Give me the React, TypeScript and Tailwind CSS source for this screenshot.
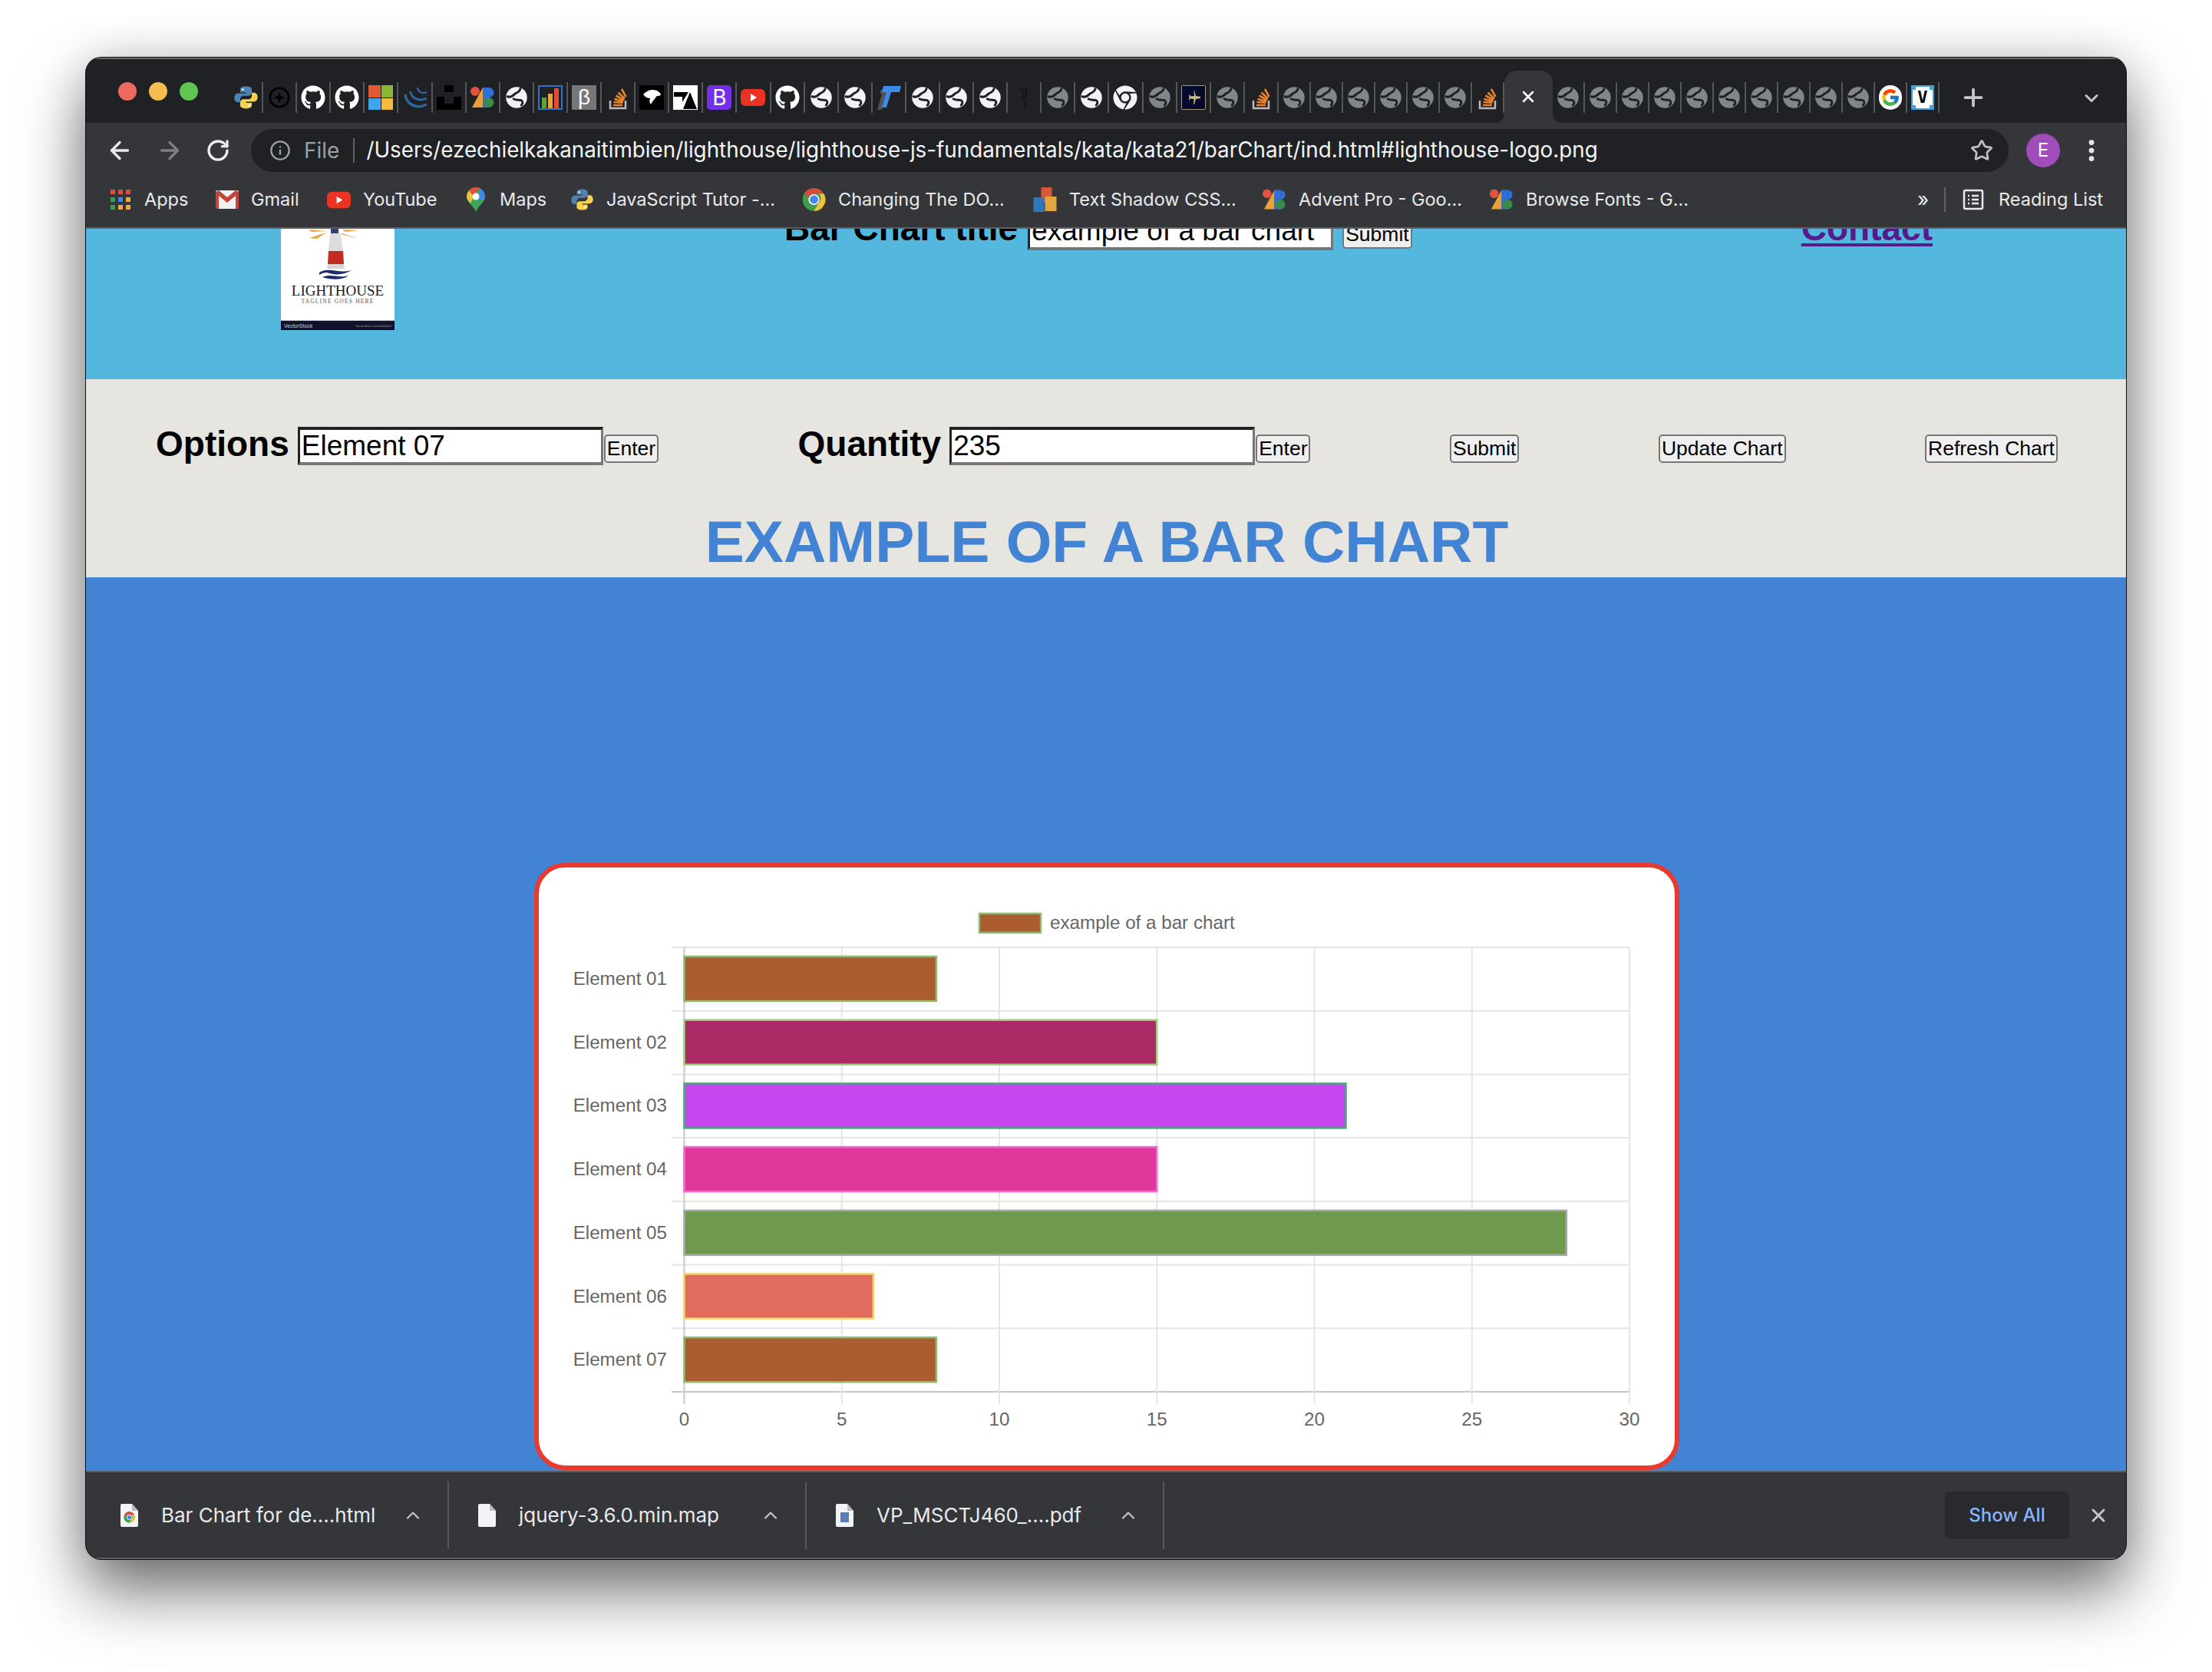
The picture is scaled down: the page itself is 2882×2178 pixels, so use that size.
import React from "react";
import { ArrowLeft, ArrowRight, RotateCw, Info, Star, MoreVertical, ChevronUp, ChevronDown, X, Plus } from "lucide-react";
import { FaGithub, FaChrome } from "react-icons/fa";
import { FcGoogle } from "react-icons/fc";

const bars = [
  { label: "Element 01", value: 8, fill: "#ab5c31", stroke: "#8dbb6f" },
  { label: "Element 02", value: 15, fill: "#ab2965", stroke: "#9fd179" },
  { label: "Element 03", value: 21, fill: "#c646f0", stroke: "#4ba97e" },
  { label: "Element 04", value: 15, fill: "#e0379c", stroke: "#f06ccb" },
  { label: "Element 05", value: 28, fill: "#6f994d", stroke: "#a9a9a9" },
  { label: "Element 06", value: 6, fill: "#e06b5e", stroke: "#f3d26e" },
  { label: "Element 07", value: 8, fill: "#ab5c31", stroke: "#8dbb6f" },
];

function Globe({ color }: { color: string }) {
  return (
    <svg viewBox="0 0 24 24" className="w-[30px] h-[32px]">
      <circle cx="12" cy="12" r="11" fill={color} />
      <path d="M2.500 11c3 1.200 5.500-.5 7.500-2.500s5-1.500 6-5.500" fill="none" stroke="#202124" strokeWidth="2.400" strokeLinecap="round" />
      <path d="M9 13.500c3 2 6 .5 8 1.500s1.500 3.500 0 5" fill="none" stroke="#202124" strokeWidth="2.400" strokeLinecap="round" />
    </svg>
  );
}

function Python({ className = "w-[33px] h-[34px]" }: { className?: string }) {
  const half = "M12 1.500c-3.500 0-5.500 1-5.500 3v2.500h5.500v1H4.500C2.500 8 1 9.800 1 12.300s1.300 4.200 3.500 4.200h2v-2.800c0-2 1.600-3.400 3.500-3.400h4.500c1.600 0 3-1.300 3-3V4.500c0-2-2.500-3-5.500-3z";
  return (
    <svg viewBox="0 0 24 24" className={className}>
      <path d={half} fill="#4f83b3" />
      <path d={half} fill="#f7d04f" transform="rotate(180 12 12)" />
      <circle cx="9" cy="4.400" r="1" fill="#fff" />
      <circle cx="15" cy="19.600" r="1" fill="#fff" />
    </svg>
  );
}

function FontsLogo({ className = "w-[32px] h-[32px]" }: { className?: string }) {
  return (
    <svg viewBox="0 0 32 32" className={className}>
      <path d="M2 29 L16 3 V29 Z" fill="#eba137" />
      <circle cx="6" cy="8" r="6" fill="#e3513f" />
      <rect x="16" y="3" width="8" height="26" fill="#2d6fdc" />
      <path d="M24 3a6.500 6.500 0 0 1 0 13z" fill="#2d6fdc" />
      <circle cx="24" cy="22.500" r="6.500" fill="#3a8a4a" />
    </svg>
  );
}

function ChromeLogo({ className = "w-[32px] h-[32px]" }: { className?: string }) {
  return (
    <svg viewBox="0 0 24 24" className={className}>
      <circle cx="12" cy="12" r="11.500" fill="#3f9c4c" />
      <path d="M12 .5a11.500 11.500 0 0 1 10 5.750H12a5.750 5.750 0 0 0-5.500 4L2.500 5.500A11.500 11.500 0 0 1 12 .5z" fill="#d94a3d" />
      <path d="M22 6.250A11.500 11.500 0 0 1 12 23.500l5-8.500a5.750 5.750 0 0 0 0-8.750z" fill="#f3c23c" />
      <circle cx="12" cy="12" r="5.500" fill="#fff" />
      <circle cx="12" cy="12" r="4.200" fill="#4a84e8" />
    </svg>
  );
}

function Favicon({ kind }: { kind: string }) {
  switch (kind) {
    case "python":
      return <Python />;
    case "compass":
      return (
        <svg viewBox="0 0 32 32" className="w-[30px] h-[30px]">
          <circle cx="16" cy="16" r="13" fill="none" stroke="#000" strokeWidth="3" />
          <path d="M16 8l2 6 6 2-6 2-2 6-2-6-6-2 6-2z" fill="#000" />
        </svg>
      );
    case "github":
      return <FaGithub className="w-[32px] h-[32px] text-white" />;
    case "ms":
      return (
        <div className="grid grid-cols-2 gap-[1px] w-[32px] h-[32px]">
          <div className="bg-[#e25a33]" />
          <div className="bg-[#8cb733]" />
          <div className="bg-[#3fa6ee]" />
          <div className="bg-[#f7bb3c]" />
        </div>
      );
    case "jquery":
      return (
        <svg viewBox="0 0 32 32" className="w-[32px] h-[32px]" fill="none" stroke="#2f659f">
          <path d="M3 12c1 12 14 20 28 13" strokeWidth="3.500" />
          <path d="M10 8c0 8 10 14 21 9" strokeWidth="3" />
          <path d="M19 3c0 5 6 9 12 6" strokeWidth="2.500" />
        </svg>
      );
    case "unsplash":
      return (
        <svg viewBox="0 0 32 32" className="w-[32px] h-[32px]">
          <path d="M10 0h12v9H10zM0 15h10v9h12v-9h10v17H0z" fill="#000" />
        </svg>
      );
    case "fonts":
      return <FontsLogo />;
    case "globe":
      return <Globe color="#f1f3f4" />;
    case "gray":
      return <Globe color="#80868b" />;
    case "bars":
      return (
        <div className="flex items-end justify-center gap-[2px] w-[32px] h-[32px] border-2 border-[#2d74c9] px-[3px]">
          <div className="w-[6px] h-[14px] bg-[#58a530]" />
          <div className="w-[6px] h-[19px] bg-[#eba137]" />
          <div className="w-[6px] h-[26px] bg-[#e54b35]" />
        </div>
      );
    case "beta":
      return (
        <div className="flex items-center justify-center w-[32px] h-[32px] bg-[#777] text-white text-[28px] leading-none font-['Liberation_Sans',sans-serif]">
          β
        </div>
      );
    case "so":
      return (
        <svg viewBox="0 0 32 32" className="w-[32px] h-[32px]">
          <path d="M6 20v10h20V20" fill="none" stroke="#bcbbbb" strokeWidth="2.500" />
          <path d="M10 26h12M10.500 22l12 .8M11.500 18l11.500 3M13.500 13.500l10.500 6M16.500 9.500l8.500 8M21 5l5.500 10" stroke="#e9822d" strokeWidth="2.600" fill="none" />
        </svg>
      );
    case "eagle":
      return (
        <svg viewBox="0 0 32 32" className="w-[32px] h-[32px] bg-black">
          <path d="M5 12c3-3 7-6 12-6 5 0 9 2 11 6-1 2-3 2-5 2-2 2-4 5-7 9l-1 2c-2-2-2-5-1-8-3 0-6-1-9-5z" fill="#fff" />
        </svg>
      );
    case "ta":
      return (
        <svg viewBox="0 0 32 32" className="w-[32px] h-[32px] bg-white">
          <path d="M1 9h19l-8 13 0-7H1zM22 9l9 22H13z" fill="#000" />
        </svg>
      );
    case "bootstrap":
      return (
        <div className="flex items-center justify-center w-[32px] h-[32px] rounded-[5px] bg-[#7430e9] text-white text-[28px] leading-none font-['Inter',sans-serif]">
          B
        </div>
      );
    case "youtube":
      return (
        <svg viewBox="0 0 32 32" className="w-[32px] h-[32px]">
          <rect x="0" y="5" width="32" height="22" rx="6" fill="#ea3323" />
          <path d="M13 11l8 5-8 5z" fill="#fff" />
        </svg>
      );
    case "tail":
      return (
        <svg viewBox="0 0 32 32" className="w-[32px] h-[32px]">
          <path d="M6 6h8l-1 5-6 21H1l6-21H4z" fill="#4d5358" />
          <path d="M9 1h23l-2 8H19l-6 20H7l6-20H7z" fill="#3a8ce8" />
        </svg>
      );
    case "sketch":
      return (
        <svg viewBox="0 0 32 32" className="w-[30px] h-[34px]" fill="none" stroke="#0c0c0c" strokeWidth="1">
          <path d="M8 4l8 2c4 2 4 6 1 9l-5 3M14 6l4 26M20 4l-2 14" />
        </svg>
      );
    case "chromewhite":
      return <FaChrome className="w-[32px] h-[32px] text-[#f1f3f4]" />;
    case "plane":
      return (
        <svg viewBox="0 0 32 32" className="w-[32px] h-[32px]">
          <rect x="0.500" y="0.500" width="31" height="31" rx="1" fill="#060a2a" stroke="#a89a80" />
          <path d="M17 7l2 7 6 1v2l-6 1-2 7h-1l.5-7-4.500-.5-1.500 2H10l.5-3.500-.5-3.500h1l1.500 2 4.500-.5-.5-7z" fill="#cdb98e" />
        </svg>
      );
    case "google":
      return (
        <div className="flex items-center justify-center w-[30px] h-[32px] rounded-full bg-white">
          <FcGoogle className="w-[26px] h-[26px]" />
        </div>
      );
    case "vb":
      return (
        <div className="relative flex items-center justify-center w-[30px] h-[32px] border-2 border-[#42a0d8] bg-white text-black font-bold text-[22px] leading-none font-['DejaVu_Sans_Mono',monospace]">
          V
          <div className="absolute -left-[2px] -top-[2px] w-[6px] h-[6px] bg-[#42a0d8]" />
          <div className="absolute -right-[2px] -top-[2px] w-[6px] h-[6px] bg-[#42a0d8]" />
          <div className="absolute -left-[2px] -bottom-[2px] w-[6px] h-[6px] bg-[#42a0d8]" />
          <div className="absolute -right-[2px] -bottom-[2px] w-[6px] h-[6px] bg-[#42a0d8]" />
        </div>
      );
    default:
      return null;
  }
}

const tabsBefore = [
  "python", "compass", "github", "github", "ms", "jquery", "unsplash", "fonts", "globe", "bars",
  "beta", "so", "eagle", "ta", "bootstrap", "youtube", "github", "globe", "globe", "tail",
  "globe", "globe", "globe", "sketch", "gray", "globe", "chromewhite", "gray", "plane", "gray", "so",
];
const tabsMiddle = ["gray", "gray", "gray", "gray", "gray", "gray", "so"];
const tabsAfter = ["gray", "gray", "gray", "gray", "gray", "gray", "gray", "gray", "gray", "gray", "google", "vb"];

function Tab({ kind, wide }: { kind: string; wide?: boolean }) {
  return (
    <div className={wide ? "w-[44.1px] h-[40px] mt-[15px] flex items-center justify-center border-r-2 border-[#55575b]" : "w-[42px] h-[40px] mt-[15px] flex items-center justify-center border-r-2 border-[#55575b]"}>
      <Favicon kind={kind} />
    </div>
  );
}

function Bookmark({ icon, label, width }: { icon: React.ReactNode; label: string; width: string }) {
  return (
    <div className={`flex items-center gap-[16px] shrink-0 ${width}`}>
      <div className="w-[31px] h-[32px] flex items-center justify-center">{icon}</div>
      <span>{label}</span>
    </div>
  );
}

function PageIcon({ children }: { children?: React.ReactNode }) {
  return (
    <div className="relative flex items-center justify-center w-[23px] h-[30px]">
      <svg viewBox="0 0 23 30" className="absolute inset-0 w-[23px] h-[30px]">
        <path d="M0 2Q0 0 2 0H15L23 9V28Q23 30 21 30H2Q0 30 0 28Z" fill="#f1f3f4" />
        <path d="M15 0V9H23Z" fill="#b8babd" />
      </svg>
      <div className="relative mt-[6px] flex">{children}</div>
    </div>
  );
}

function DownloadItem({ icon, label }: { icon: React.ReactNode; label: string }) {
  return (
    <div className="flex items-center w-[466px] h-[88px] pl-[38px] pr-[31px] border-r-2 border-[#55575b]">
      {icon}
      <span className="ml-[30px] flex-1">{label}</span>
      <ChevronUp className="w-[28px] h-[28px] text-[#bdc1c6]" />
    </div>
  );
}

function FieldLabel({ text, offset }: { text: string; offset: "options" | "title" }) {
  return (
    <span className={offset === "options" ? "h-[50px] leading-[50px] -mt-[3px] text-[46px] font-bold text-black mr-[11px]" : "h-[50px] leading-[50px] -mt-[4px] text-[46px] font-bold text-black mr-[13px]"}>
      {text}
    </span>
  );
}

function FieldInput({ value }: { value: string }) {
  return (
    <input
      readOnly
      value={value}
      className="w-[398px] h-[50px] px-[2px] pb-[1px] border-y-4 border-x-[3px] border-t-[#222] border-l-[#222] border-b-[#767676] border-r-[#767676] bg-white text-[37px] leading-none text-black outline-none"
    />
  );
}

function PageButton({ text }: { text: string }) {
  return (
    <button className="h-[37px] px-[2px] border-2 border-[#767676] rounded-[5px] bg-[#efefef] text-[26.500px] leading-none text-black">
      {text}
    </button>
  );
}

function Chart() {
  const x0 = 890.5;
  const unit = 41.05;
  const top = 1234;
  const row = 82.7;
  return (
    <svg viewBox="701 1130 1480 779" className="w-[1480px] h-[779px]" fontFamily="'Liberation Sans', sans-serif">
      <rect x="1275" y="1190" width="80" height="25" fill="#ab5c31" stroke="#8dbb6f" strokeWidth="2.500" />
      <text x="1367" y="1210" fontSize="24.200" fill="#666">example of a bar chart</text>

      {[0, 1, 2, 3, 4, 5, 6].map((i) => (
        <line key={i} x1="874" x2="2122" y1={top + i * row} y2={top + i * row} stroke="#e5e5e5" strokeWidth="2" />
      ))}
      <line x1="874" x2="2122" y1={top + 7 * row} y2={top + 7 * row} stroke="#c8c8c8" strokeWidth="2" />
      {[0, 5, 10, 15, 20, 25, 30].map((t) => (
        <g key={t}>
          <line x1={x0 + t * unit} x2={x0 + t * unit} y1={top} y2={top + 7 * row + 16} stroke={t === 0 ? "#c8c8c8" : "#e5e5e5"} strokeWidth="2" />
          <text x={x0 + t * unit} y="1857" fontSize="24.200" fill="#666" textAnchor="middle">{t}</text>
        </g>
      ))}
      {bars.map((b, i) => (
        <g key={b.label}>
          <rect x={x0} y={top + i * row + 12} width={b.value * unit} height="58" fill={b.fill} stroke={b.stroke} strokeWidth="2.500" />
          <text x="868" y={top + i * row + 49} fontSize="24.200" fill="#666" textAnchor="end">{b.label}</text>
        </g>
      ))}
    </svg>
  );
}

function Logo() {
  return (
    <svg viewBox="366 298 148 132" className="w-[148px] h-[132px] bg-white" fontFamily="'Liberation Serif', serif">
      <path d="M402 299l24 2-20 1zM403 310l22-7-12 8zM446 299l22 1-18 2zM446 304l20 7-22-6z" fill="#f0a33c" />
      <path d="M431 298h10v6h-10z" fill="#33407a" />
      <path d="M430 304h14l3 24h-19z" fill="#dcdcdc" />
      <path d="M428 327h19l1 17h-21z" fill="#c52b20" />
      <path d="M427 344h21l1 6h-23z" fill="#d5d5d5" />
      <path d="M416 355c12-8 24 2 42-3-9 6-22 7-32 3-4 0-7 1-10 3z M420 361c12-5 20 2 34-2-8 6-22 6-34 2z" fill="#1d2a6b" />
      <text x="440" y="385" fontSize="19" fill="#1b1b1b" textAnchor="middle">LIGHTHOUSE</text>
      <text x="440" y="395" fontSize="7.500" fill="#555" textAnchor="middle" letterSpacing="1.200">TAGLINE GOES HERE</text>
      <rect x="366" y="417" width="148" height="1.500" fill="#bbb" />
      <rect x="366" y="418" width="148" height="12" fill="#12122a" />
      <text x="370" y="427" fontSize="7" fill="#ccc" fontFamily="'Liberation Sans', sans-serif">VectorStock</text>
      <text x="510" y="426" fontSize="4" fill="#999" textAnchor="end" fontFamily="'Liberation Sans', sans-serif">VectorStock.com/0000000</text>
    </svg>
  );
}

export default function App() {
  return (
    <div className="w-[2882px] h-[2178px] pt-[75px] pl-[112px] overflow-hidden bg-white font-['Liberation_Sans',sans-serif]">
      <div className="flex flex-col w-[2658px] h-[1956px] rounded-[20px] overflow-hidden bg-[#202124] shadow-[0_0_0_1px_#111,0_42px_84px_rgba(0,0,0,0.55),0_0_60px_rgba(0,0,0,0.15)] font-['Inter',sans-serif]">
        {/* Tab strip */}
        <div className="relative flex shrink-0 h-[85px] pt-[15px] border-t-2 border-[#6a6a6c] bg-[#202124]">
          <div className="flex gap-[16px] pl-[42px] pt-[15px] mr-[41px]">
            <div className="w-[24px] h-[24px] rounded-full bg-[#ed6a5e]" />
            <div className="w-[24px] h-[24px] rounded-full bg-[#f5bd4f]" />
            <div className="w-[24px] h-[24px] rounded-full bg-[#61c554]" />
          </div>
          {tabsBefore.map((kind, i) => (
            <Tab key={i} kind={kind} wide />
          ))}
          {tabsMiddle.map((kind, i) => (
            <Tab key={i} kind={kind} />
          ))}
          <div className="relative flex items-center justify-center w-[63px] h-[68px] rounded-t-[16px] bg-[#35363a]">
            <X className="w-[24px] h-[24px] text-white" strokeWidth={2.500} />
            <div className="absolute -left-[12px] bottom-0 w-[12px] h-[12px] bg-[#35363a]">
              <div className="w-full h-full rounded-br-[12px] bg-[#202124]" />
            </div>
            <div className="absolute -right-[12px] bottom-0 w-[12px] h-[12px] bg-[#35363a]">
              <div className="w-full h-full rounded-bl-[12px] bg-[#202124]" />
            </div>
          </div>
          {tabsAfter.map((kind, i) => (
            <Tab key={i} kind={kind} />
          ))}
          <Plus className="ml-[26px] mt-[17px] w-[36px] h-[36px] text-[#c4c7cb]" strokeWidth={2.500} />
          <ChevronDown className="ml-[122px] mt-[22px] w-[28px] h-[28px] text-[#c4c7cb]" strokeWidth={2.500} />
        </div>

        {/* Address bar */}
        <div className="flex items-center shrink-0 h-[72px] bg-[#35363a]">
          <ArrowLeft className="ml-[26px] w-[36px] h-[36px] text-[#e8eaed]" strokeWidth={2.200} />
          <ArrowRight className="ml-[29px] w-[36px] h-[36px] text-[#7c7f83]" strokeWidth={2.200} />
          <RotateCw className="ml-[29px] w-[32px] h-[32px] text-[#e8eaed]" strokeWidth={2.500} />
          <div className="flex items-center flex-1 h-[56px] ml-[27px] pl-[24px] pr-[20px] rounded-[28px] bg-[#202124]">
            <Info className="w-[28px] h-[28px] text-[#9aa0a6]" strokeWidth={2} />
            <span className="ml-[17px] text-[28px] text-[#9aa0a6]">File</span>
            <div className="ml-[18px] w-[2px] h-[32px] bg-[#5f6368]" />
            <span className="ml-[15px] flex-1 text-[27.800px] text-[#f1f3f4]">/Users/ezechielkakanaitimbien/lighthouse/lighthouse-js-fundamentals/kata/kata21/barChart/ind.html#lighthouse-logo.png</span>
            <Star className="w-[30px] h-[30px] text-[#bdc1c6]" strokeWidth={2.200} />
          </div>
          <div className="flex items-center justify-center w-[44px] h-[44px] ml-[23px] rounded-full bg-[#a04cba] text-white text-[24px]">E</div>
          <MoreVertical className="ml-[23px] mr-[27px] w-[36px] h-[36px] text-[#e8eaed]" strokeWidth={2.500} />
        </div>

        {/* Bookmarks bar */}
        <div className="flex items-center shrink-0 h-[66px] pb-[8px] pl-[29px] pr-[30px] border-b-2 border-[#5f6063] bg-[#35363a] text-[23.500px] text-[#e8eaed]">
          <Bookmark
            width="w-[139px]"
            label="Apps"
            icon={
              <div className="grid grid-cols-3 gap-[4px]">
                {["#e0503d", "#e0503d", "#e0503d", "#3f9c4c", "#4285f4", "#f3a73b", "#3f9c4c", "#f3a73b", "#f3a73b"].map((c, i) => (
                  <div key={i} className="w-[6px] h-[6px]" style={{ backgroundColor: c }} />
                ))}
              </div>
            }
          />
          <Bookmark
            width="w-[146px]"
            label="Gmail"
            icon={
              <svg viewBox="0 0 30 24" className="w-[30px] h-[24px]">
                <rect width="30" height="24" rx="2" fill="#f1f1f1" />
                <path d="M0 2v22h4V7l11 9 11-9v17h4V2l-4-2-11 9L4 0z" fill="#c5443a" />
              </svg>
            }
          />
          <Bookmark
            width="w-[178px]"
            label="YouTube"
            icon={
              <svg viewBox="0 0 32 32" className="w-[31px] h-[31px]">
                <rect x="0" y="5" width="32" height="22" rx="6" fill="#ea3323" />
                <path d="M13 11l8 5-8 5z" fill="#fff" />
              </svg>
            }
          />
          <Bookmark
            width="w-[139px]"
            label="Maps"
            icon={
              <svg viewBox="0 0 24 32" className="w-[24px] h-[32px]">
                <path d="M12 0A12 12 0 0 0 1 16c2 5 9 10 11 16 2-6 9-11 11-16A12 12 0 0 0 12 0z" fill="#3ea65a" />
                <path d="M3 4a12 12 0 0 1 14-3L8 12z" fill="#e0503d" />
                <path d="M17 1a12 12 0 0 1 6 15H16z" fill="#4285f4" />
                <path d="M1 16a12 12 0 0 1 2-12l6 8-4 9z" fill="#f3c23c" />
                <circle cx="12" cy="12" r="4.500" fill="#fff" />
              </svg>
            }
          />
          <Bookmark width="w-[302px]" label="JavaScript Tutor -..." icon={<Python className="w-[31px] h-[32px]" />} />
          <Bookmark width="w-[301px]" label="Changing The DO..." icon={<ChromeLogo />} />
          <Bookmark
            width="w-[299px]"
            label="Text Shadow CSS..."
            icon={
              <svg viewBox="0 0 30 32" className="w-[31px] h-[32px]">
                <rect x="10" y="0" width="14" height="20" fill="#d9573a" />
                <rect x="0" y="13" width="14" height="19" fill="#2f78bd" />
                <rect x="15" y="12" width="15" height="19" fill="#e3a63f" />
              </svg>
            }
          />
          <Bookmark width="w-[296px]" label="Advent Pro - Goo..." icon={<FontsLogo />} />
          <Bookmark width="w-[290px]" label="Browse Fonts - G..." icon={<FontsLogo />} />
          <span className="ml-auto text-[26px] leading-none">»</span>
          <div className="ml-[20px] w-[2px] h-[32px] bg-[#5f6368]" />
          <svg viewBox="0 0 28 28" className="ml-[22px] w-[28px] h-[30px]" fill="none" stroke="#e8eaed" strokeWidth="2.500">
            <rect x="2" y="2" width="24" height="24" rx="2" />
            <path d="M7 9h2M12 9h9M7 14h2M12 14h9M7 19h2M12 19h9" />
          </svg>
          <span className="ml-[19px]">Reading List</span>
        </div>

        {/* Page header, scrolled so its top is cut off */}
        <header className="flex shrink-0 h-[196px] pl-[254px] pr-[252px] overflow-hidden bg-[#54b8de] font-['Liberation_Sans',sans-serif]">
          <Logo />
          <div className="flex items-start h-[50px] -mt-[22px] ml-[508px]">
            <FieldLabel text="Bar Chart title" offset="title" />
            <FieldInput value="example of a bar chart" />
            <div className="ml-[12px] mt-[11px]">
              <PageButton text="Submit" />
            </div>
          </div>
          <a href="#contact" className="ml-auto -mt-[26px] h-[50px] leading-[50px] text-[46px] font-bold text-[#551a8b] underline decoration-[4px] underline-offset-[4px]">
            Contact
          </a>
        </header>

        {/* Form and heading */}
        <section className="shrink-0 h-[258px] pt-[62px] pl-[91px] pr-[89px] bg-[#e6e5e0] font-['Liberation_Sans',sans-serif]">
          <div className="flex justify-between h-[50px]">
            <div className="flex items-start">
              <FieldLabel text="Options" offset="options" />
              <FieldInput value="Element 07" />
              <div className="ml-[1px] mt-[10px]">
                <PageButton text="Enter" />
              </div>
            </div>
            <div className="flex items-start">
              <FieldLabel text="Quantity" offset="options" />
              <FieldInput value="235" />
              <div className="ml-[1px] mt-[10px]">
                <PageButton text="Enter" />
              </div>
            </div>
            <div className="mt-[10px]">
              <PageButton text="Submit" />
            </div>
            <div className="mt-[10px]">
              <PageButton text="Update Chart" />
            </div>
            <div className="mt-[10px]">
              <PageButton text="Refresh Chart" />
            </div>
          </div>
          <h1 className="mt-[60px] text-center text-[76.700px] leading-[80px] font-bold text-[#4283d4]">EXAMPLE OF A BAR CHART</h1>
        </section>

        {/* Chart area */}
        <main className="flex flex-1 items-end justify-center bg-[#4283d4] font-['Liberation_Sans',sans-serif]">
          <div className="w-[1492px] h-[791px] ml-[1px] mb-[1px] border-[6px] border-[#ea3a2d] rounded-[40px] bg-white overflow-hidden">
            <Chart />
          </div>
        </main>

        {/* Downloads bar */}
        <footer className="flex items-center shrink-0 h-[115px] pl-[7px] border-t-2 border-b-2 border-t-[#5a5b5e] border-b-[#5e5e60] bg-[#35363a] text-[26px] text-[#e8eaed]">
          <DownloadItem
            label="Bar Chart for de....html"
            icon={
              <PageIcon>
                <ChromeLogo className="w-[15px] h-[15px]" />
              </PageIcon>
            }
          />
          <DownloadItem label="jquery-3.6.0.min.map" icon={<PageIcon />} />
          <DownloadItem
            label="VP_MSCTJ460_....pdf"
            icon={
              <PageIcon>
                <div className="w-[11px] h-[13px] bg-[#5a7fb8]" />
              </PageIcon>
            }
          />
          <div className="flex items-center justify-center w-[162px] h-[62px] ml-auto rounded-[6px] bg-[#292a2d] text-[24px] font-medium text-[#8ab4f8]">Show All</div>
          <X className="ml-[24px] mr-[22px] w-[28px] h-[28px] text-[#c4c7cb]" strokeWidth={2.500} />
        </footer>
      </div>
    </div>
  );
}
